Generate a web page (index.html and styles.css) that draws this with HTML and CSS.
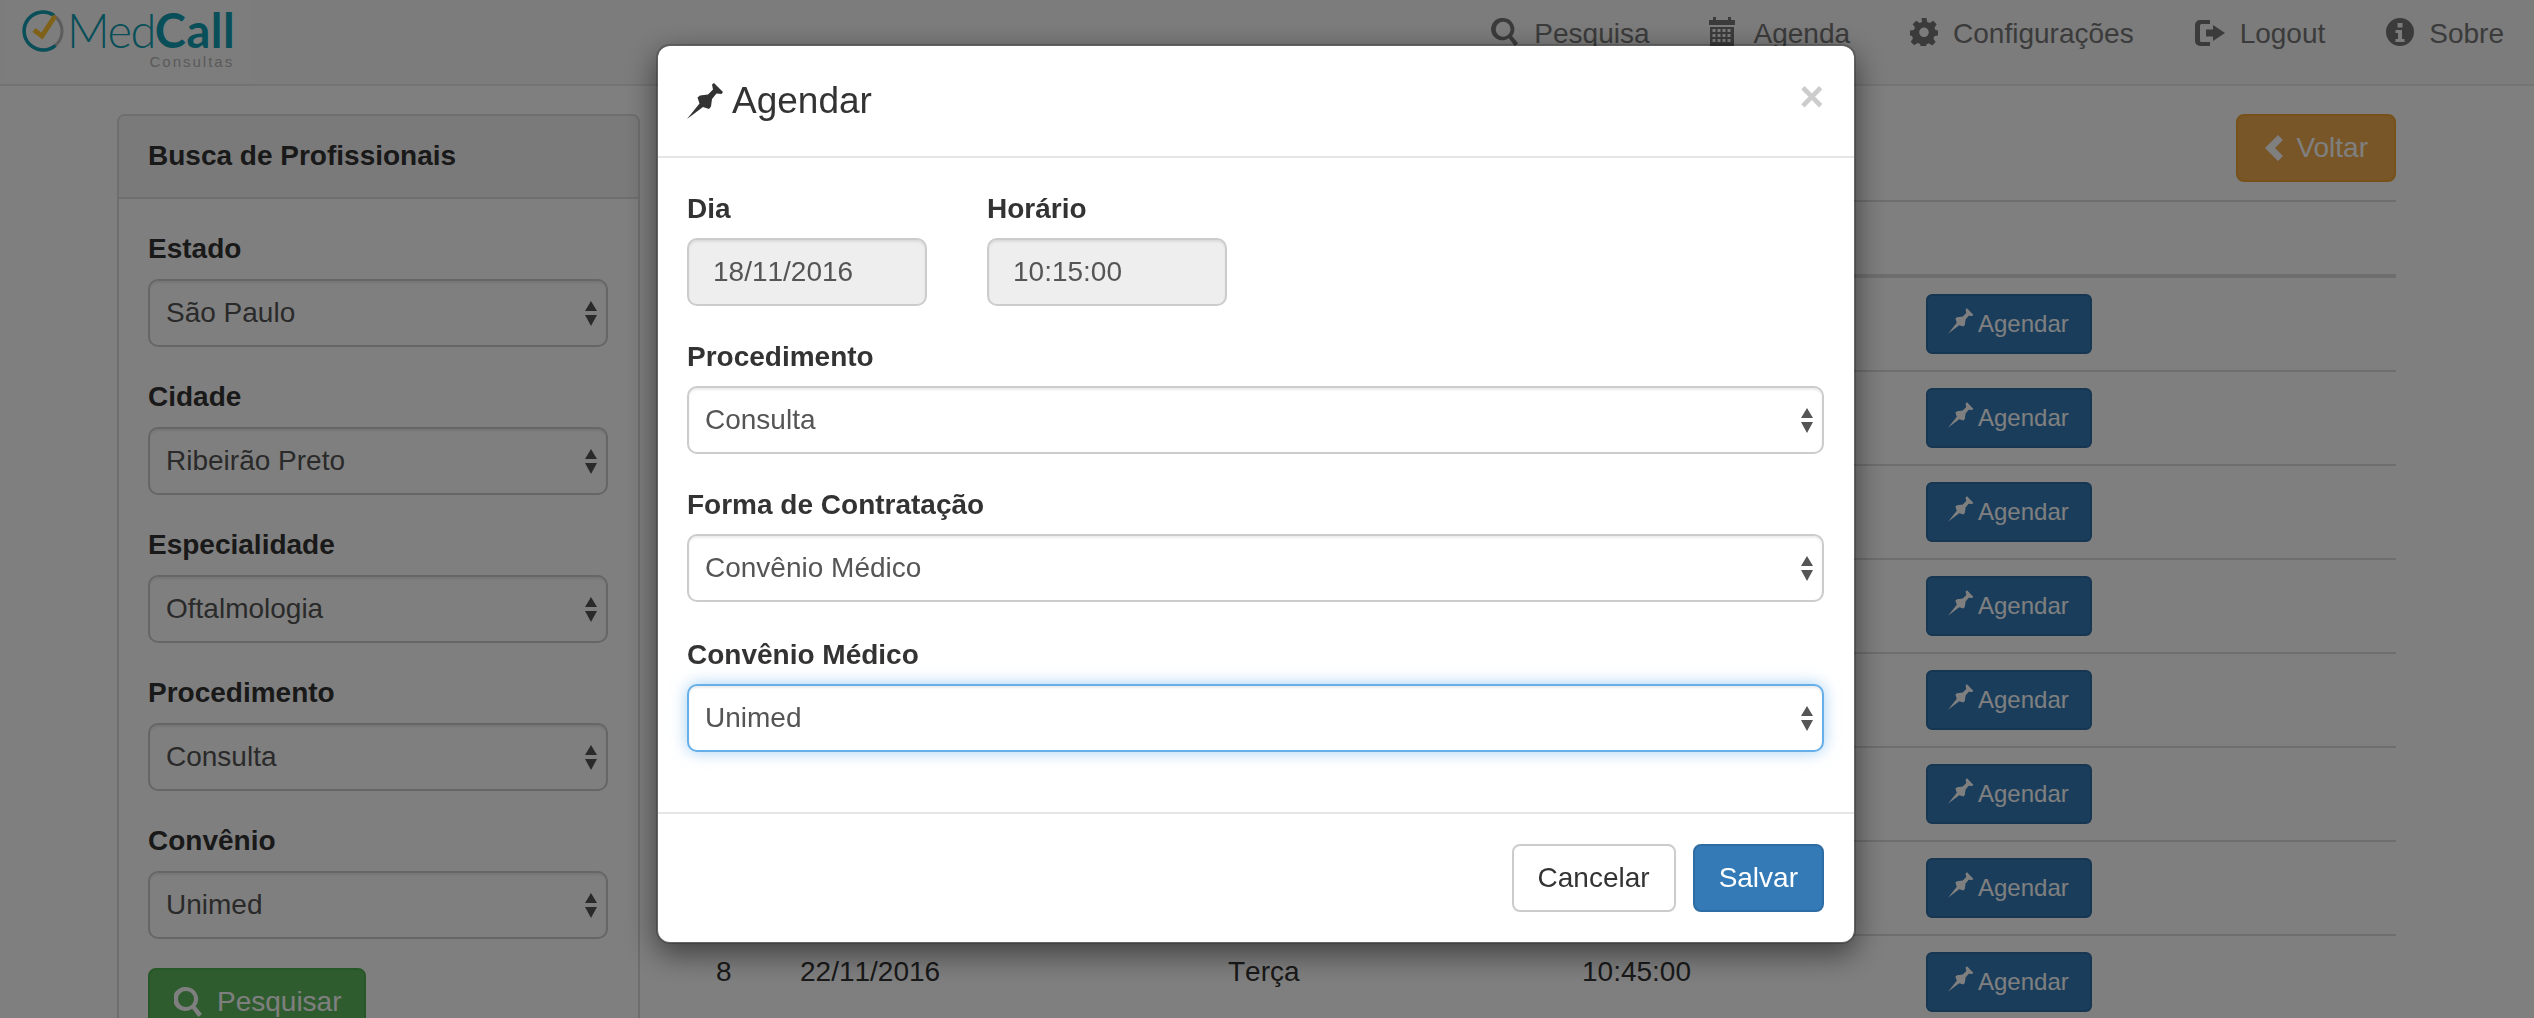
FILE: index.html
```html
<!DOCTYPE html>
<html lang="pt-BR">
<head>
    <meta charset="UTF-8">
    <meta name="viewport" content="width=device-width, initial-scale=1.0">
    <title>MedCall Consultas</title>
    <link rel="stylesheet" href="styles.css">
</head>
<body>
    <svg class="sprite" xmlns="http://www.w3.org/2000/svg">
        <symbol id="i-pin" viewBox="0 0 37 36">
            <path d="M0 36 12.500 20.500 10.500 14.500 13 12.500 21 11.500 26 6.500 25 1.500 27 0 36 9 34.500 11 29.500 10.500 25 16 24 23.500 22 26 16 24Z"/>
        </symbol>
        <symbol id="i-search" viewBox="0 0 28 30">
            <path fill-rule="evenodd" d="M12 0a12 12 0 0 1 9.600 19.200L28 27l-3.600 3-6.300-8.300A12 12 0 1 1 12 0Zm0 4a8 8 0 1 0 0 16 8 8 0 0 0 0-16Z"/>
        </symbol>
        <symbol id="i-calendar" viewBox="0 0 26 29">
            <path d="M4 0h3v3h12V0h3v3h4v5H0V3h4Z"/>
            <path fill-rule="evenodd" d="M1 10h24v19H1ZM3.500 12v3h3v-3Zm5 0v3h3v-3Zm5 0v3h3v-3Zm5 0v3h3v-3ZM3.500 17v3h3v-3Zm5 0v3h3v-3Zm5 0v3h3v-3Zm5 0v3h3v-3ZM3.500 22v3h3v-3Zm5 0v3h3v-3Zm5 0v3h3v-3Zm5 0v3h3v-3Z"/>
        </symbol>
        <symbol id="i-cog" viewBox="0 0 28 28">
            <path fill-rule="evenodd" d="M11.500 0h5l.7 4 2.600 1.100L23.200 2.800l3.500 3.500-2.300 3.400L25.500 12l2.500.5v5l-3.500.6-1.100 2.600 2.300 3.300-3.500 3.500-3.400-2.300-2.300 1-.7 2.800h-5l-.7-3-2.500-1-3.400 2.300-3.500-3.500 2.300-3.300-1.100-2.600L0 17.500v-5l3.900-.6 1.100-2.500-2.300-3.100 3.500-3.500 3.400 2.300L12 4ZM14 9.500a4.800 4.800 0 1 0 0 9.600 4.800 4.800 0 0 0 0-9.600Z"/>
        </symbol>
        <symbol id="i-logout" viewBox="0 0 30 26">
            <path d="M5 0h10v4H6.500A1.500 1.500 0 0 0 5 5.500v15A1.500 1.500 0 0 0 6.500 22H15v4H5a5 5 0 0 1-5-5V5a5 5 0 0 1 5-5Z"/>
            <path d="M11 9.500h7V5l12 8-12 8v-4.500h-7Z"/>
        </symbol>
        <symbol id="i-info" viewBox="0 0 28 28">
            <path fill-rule="evenodd" d="M14 0a14 14 0 1 1 0 28 14 14 0 0 1 0-28Zm-2.500 5v4.500h5V5ZM9.500 12v3h2.500v6H9.500v3h9v-3H16v-9Z"/>
        </symbol>
        <symbol id="i-chevron" viewBox="0 0 18 26">
            <path d="M13 0l5 5-8 8 8 8-5 5L0 13Z"/>
        </symbol>
    </svg>

    <nav class="navbar">
        <a class="logo">
            <svg class="logo-mark" viewBox="0 0 42 42">
                <circle cx="21" cy="21" r="19" fill="none" stroke="#b8b8b8" stroke-width="3"/>
                <path d="M32 5.500A19 19 0 1 0 33.500 35.500" fill="none" stroke="#109fb2" stroke-width="3.500"/>
                <path d="M12 20l8 6L33 6" fill="none" stroke="#ffc430" stroke-width="5"/>
            </svg>
            <span class="logo-text">
                <span class="logo-name">Med<b>Call</b></span>
                <span class="logo-sub">Consultas</span>
            </span>
        </a>
        <ul class="nav-links">
            <li><svg class="nav-icon"><use href="#i-search"/></svg>Pesquisa</li>
            <li class="nav-agenda"><svg class="nav-icon icon-tall"><use href="#i-calendar"/></svg>Agenda</li>
            <li><svg class="nav-icon"><use href="#i-cog"/></svg>Configurações</li>
            <li><svg class="nav-icon icon-wide"><use href="#i-logout"/></svg>Logout</li>
            <li><svg class="nav-icon"><use href="#i-info"/></svg>Sobre</li>
        </ul>
    </nav>

    <main class="page">
        <aside class="panel">
            <div class="panel-heading">Busca de Profissionais</div>
            <div class="panel-body">
                <div class="form-group">
                    <label>Estado</label>
                    <select class="form-control"><option>São Paulo</option></select>
                </div>
                <div class="form-group">
                    <label>Cidade</label>
                    <select class="form-control"><option>Ribeirão Preto</option></select>
                </div>
                <div class="form-group">
                    <label>Especialidade</label>
                    <select class="form-control"><option>Oftalmologia</option></select>
                </div>
                <div class="form-group">
                    <label>Procedimento</label>
                    <select class="form-control"><option>Consulta</option></select>
                </div>
                <div class="form-group">
                    <label>Convênio</label>
                    <select class="form-control"><option>Unimed</option></select>
                </div>
                <button class="btn btn-success"><svg class="btn-icon"><use href="#i-search"/></svg>Pesquisar</button>
            </div>
        </aside>

        <section class="content">
            <div class="content-head">
                <button class="btn btn-warning"><svg class="btn-chevron"><use href="#i-chevron"/></svg>Voltar</button>
            </div>
            <table class="agenda">
                <colgroup>
                    <col class="col-num"><col class="col-dia"><col class="col-semana"><col class="col-hora"><col>
                </colgroup>
                <thead>
                    <tr><th></th><th></th><th></th><th></th><th></th></tr>
                </thead>
                <tbody>
                    <tr><td></td><td></td><td></td><td></td><td><button class="btn btn-primary btn-sm"><svg class="pin-sm"><use href="#i-pin"/></svg>Agendar</button></td></tr>
                    <tr><td></td><td></td><td></td><td></td><td><button class="btn btn-primary btn-sm"><svg class="pin-sm"><use href="#i-pin"/></svg>Agendar</button></td></tr>
                    <tr><td></td><td></td><td></td><td></td><td><button class="btn btn-primary btn-sm"><svg class="pin-sm"><use href="#i-pin"/></svg>Agendar</button></td></tr>
                    <tr><td></td><td></td><td></td><td></td><td><button class="btn btn-primary btn-sm"><svg class="pin-sm"><use href="#i-pin"/></svg>Agendar</button></td></tr>
                    <tr><td></td><td></td><td></td><td></td><td><button class="btn btn-primary btn-sm"><svg class="pin-sm"><use href="#i-pin"/></svg>Agendar</button></td></tr>
                    <tr><td></td><td></td><td></td><td></td><td><button class="btn btn-primary btn-sm"><svg class="pin-sm"><use href="#i-pin"/></svg>Agendar</button></td></tr>
                    <tr><td></td><td></td><td></td><td></td><td><button class="btn btn-primary btn-sm"><svg class="pin-sm"><use href="#i-pin"/></svg>Agendar</button></td></tr>
                    <tr><td>8</td><td>22/11/2016</td><td>Terça</td><td>10:45:00</td><td><button class="btn btn-primary btn-sm"><svg class="pin-sm"><use href="#i-pin"/></svg>Agendar</button></td></tr>
                </tbody>
            </table>
        </section>
    </main>

    <div class="backdrop"></div>

    <div class="modal">
        <div class="modal-header">
            <h4 class="modal-title"><svg class="pin-lg"><use href="#i-pin"/></svg>Agendar</h4>
            <span class="close">×</span>
        </div>
        <div class="modal-body">
            <div class="form-row">
                <div class="form-group field-dia">
                    <label>Dia</label>
                    <input class="form-control" type="text" value="18/11/2016" disabled>
                </div>
                <div class="form-group field-hora">
                    <label>Horário</label>
                    <input class="form-control" type="text" value="10:15:00" disabled>
                </div>
            </div>
            <div class="form-group">
                <label>Procedimento</label>
                <select class="form-control"><option>Consulta</option></select>
            </div>
            <div class="form-group">
                <label>Forma de Contratação</label>
                <select class="form-control"><option>Convênio Médico</option></select>
            </div>
            <div class="form-group group-convenio">
                <label>Convênio Médico</label>
                <select class="form-control is-focus"><option>Unimed</option></select>
            </div>
        </div>
        <div class="modal-footer">
            <button class="btn btn-default">Cancelar</button>
            <button class="btn btn-primary">Salvar</button>
        </div>
    </div>
</body>
</html>
```

FILE: styles.css
```css
* {
    box-sizing: border-box;
}

body {
    margin: 0;
    height: 1018px;
    overflow: hidden;
    background-color: #fff;
    color: #333;
    font-family: "Liberation Sans", Arial, sans-serif;
    font-size: 28px;
    line-height: 40px;
}

.sprite {
    display: none;
}

svg {
    fill: currentColor;
    flex-shrink: 0;
}

/* navbar */
.navbar {
    display: flex;
    justify-content: space-between;
    height: 86px;
    background-color: #f8f8f8;
    border-bottom: 2px solid #e7e7e7;
}

.logo {
    display: flex;
    width: 245px;
    height: 82px;
    margin-left: 5px;
    padding: 10px 0 0 17px;
    gap: 3px;
    background-color: #fbfbfb;
}

.logo-mark {
    width: 42px;
    height: 42px;
}

.logo-text {
    display: flex;
    flex-direction: column;
    align-items: flex-end;
    margin-top: -5px;
}

.logo-name {
    font-family: Lato, sans-serif;
    font-size: 47px;
    font-weight: 300;
    line-height: 50px;
    color: #109fb2;
    letter-spacing: -1.5px;
}

.logo-name b {
    font-weight: 700;
    letter-spacing: 0.5px;
}

.logo-sub {
    margin: 0 1px 0 0;
    font-family: "Liberation Sans", sans-serif;
    font-size: 15px;
    line-height: 14px;
    color: #b4b4b4;
    letter-spacing: 2px;
}

.nav-links {
    display: flex;
    margin: 0;
    padding: 14px 0 0;
    list-style: none;
    color: #777;
}

.nav-links li {
    display: flex;
    align-items: flex-start;
    gap: 15px;
    padding: 0 30px 0 31px;
}

.nav-links .nav-agenda {
    padding-right: 29px;
}

.nav-icon {
    width: 28px;
    height: 28px;
    margin-top: 4px;
}

.icon-tall {
    width: 26px;
    height: 29px;
    margin: 3px 4px 0 -2px;
}

.icon-wide {
    width: 30px;
    height: 26px;
    margin-top: 6px;
}

/* page */
.page {
    display: flex;
    gap: 29px;
    padding: 28px 138px 0 117px;
}

.panel {
    width: 523px;
    flex-shrink: 0;
    border: 2px solid #ddd;
    border-radius: 8px;
    height: 1000px;
}

.panel-heading {
    height: 83px;
    padding: 20px 29px 0;
    background-color: #f5f5f5;
    border-bottom: 2px solid #ddd;
    font-weight: bold;
    border-radius: 6px 6px 0 0;
}

.panel-body {
    padding: 30px 30px 30px 29px;
}

.form-group {
    margin-bottom: 30px;
}

label {
    display: block;
    margin-bottom: 10px;
    font-weight: bold;
}

.form-control {
    display: block;
    width: 100%;
    height: 68px;
    padding: 0 16px;
    border: 2px solid #ccc;
    border-radius: 10px;
    background-color: #fff;
    color: #555;
    font: inherit;
    font-kerning: none;
    box-shadow: inset 0 2px 2px rgba(0,0,0,0.075);
}

select.form-control {
    appearance: none;
    background-image: url("data:image/svg+xml,%3Csvg xmlns='http://www.w3.org/2000/svg' width='12' height='25'%3E%3Cpath fill='%23555' d='M6 0l6 10H0ZM0 14h12L6 25Z'/%3E%3C/svg%3E");
    background-repeat: no-repeat;
    background-position: right 9px center;
}

.is-focus {
    border-color: #66afe9;
    box-shadow: inset 0 2px 2px rgba(0,0,0,0.075), 0 0 16px rgba(102,175,233,0.6);
}

input.form-control {
    padding-left: 24px;
    background-color: #eee;
    opacity: 1;
}

/* buttons */
.btn {
    display: inline-flex;
    align-items: center;
    height: 68px;
    padding: 0 24px;
    border: 2px solid transparent;
    border-radius: 8px;
    font: inherit;
    color: #fff;
}

.btn-success {
    gap: 15px;
    margin-top: -1px;
    padding-right: 22px;
    background-color: #5cb85c;
    border-color: #4cae4c;
}

.btn-warning {
    gap: 13px;
    padding: 0 26px 0 27px;
    background-color: #f0ad4e;
    border-color: #eea236;
}

.btn-primary {
    background-color: #337ab7;
    border-color: #2e6da4;
}

.btn-default {
    margin-right: 17px;
    background-color: #fff;
    border-color: #ccc;
    color: #333;
}

.btn-sm {
    height: 60px;
    padding: 0 21px 0 20px;
    gap: 4px;
    font-size: 24px;
    border-radius: 6px;
}

.btn-icon {
    width: 28px;
    height: 30px;
}

.btn-chevron {
    width: 18px;
    height: 26px;
}

.pin-sm {
    width: 26px;
    height: 26px;
    margin-top: -6px;
}

.pin-lg {
    width: 37px;
    height: 36px;
    margin: 0 8px 0 -1px;
}

/* results */
.content {
    width: 1727px;
}

.content-head {
    display: flex;
    justify-content: flex-end;
    height: 88px;
    border-bottom: 2px solid #ddd;
}

.agenda {
    width: 100%;
    table-layout: fixed;
    border-collapse: separate;
    border-spacing: 0;
}

.col-num {
    width: 115px;
}

.col-dia {
    width: 428px;
}

.col-semana {
    width: 354px;
}

.col-hora {
    width: 344px;
}

.agenda th {
    height: 76px;
    border-bottom: 4px solid #ddd;
}

.agenda td {
    padding: 16px;
    vertical-align: top;
    border-bottom: 2px solid #ddd;
    font-kerning: none;
}

.agenda td:first-child {
    padding-left: 47px;
}

/* modal */
.backdrop {
    position: fixed;
    top: 0;
    left: 0;
    width: 100%;
    height: 100%;
    background-color: rgba(0,0,0,0.5);
}

.modal {
    position: fixed;
    top: 44px;
    left: 656px;
    width: 1200px;
    height: 900px;
    background-color: #fff;
    background-clip: padding-box;
    border: 2px solid rgba(0,0,0,0.2);
    border-radius: 14px;
    box-shadow: 0 10px 30px rgba(0,0,0,0.5);
}

.modal-header {
    display: flex;
    justify-content: space-between;
    height: 112px;
    padding: 30px;
    border-bottom: 2px solid #e5e5e5;
}

.modal-title {
    display: flex;
    align-items: center;
    height: 50px;
    margin: 0;
    font-size: 37px;
    font-weight: normal;
}

.close {
    margin-top: -4px;
    font-size: 42px;
    font-weight: bold;
    line-height: 50px;
    color: #ccc;
}

.modal-body {
    padding: 30px 30px 0 29px;
    height: 654px;
}

.modal-body label {
    padding-top: 1px;
    margin-bottom: 9px;
}

.group-convenio {
    margin-top: 32px;
}

.form-row {
    display: flex;
    gap: 60px;
}

.field-dia {
    width: 240px;
}

.field-hora {
    width: 240px;
}

.modal-footer {
    display: flex;
    justify-content: flex-end;
    padding: 30px;
    border-top: 2px solid #e5e5e5;
}
```
